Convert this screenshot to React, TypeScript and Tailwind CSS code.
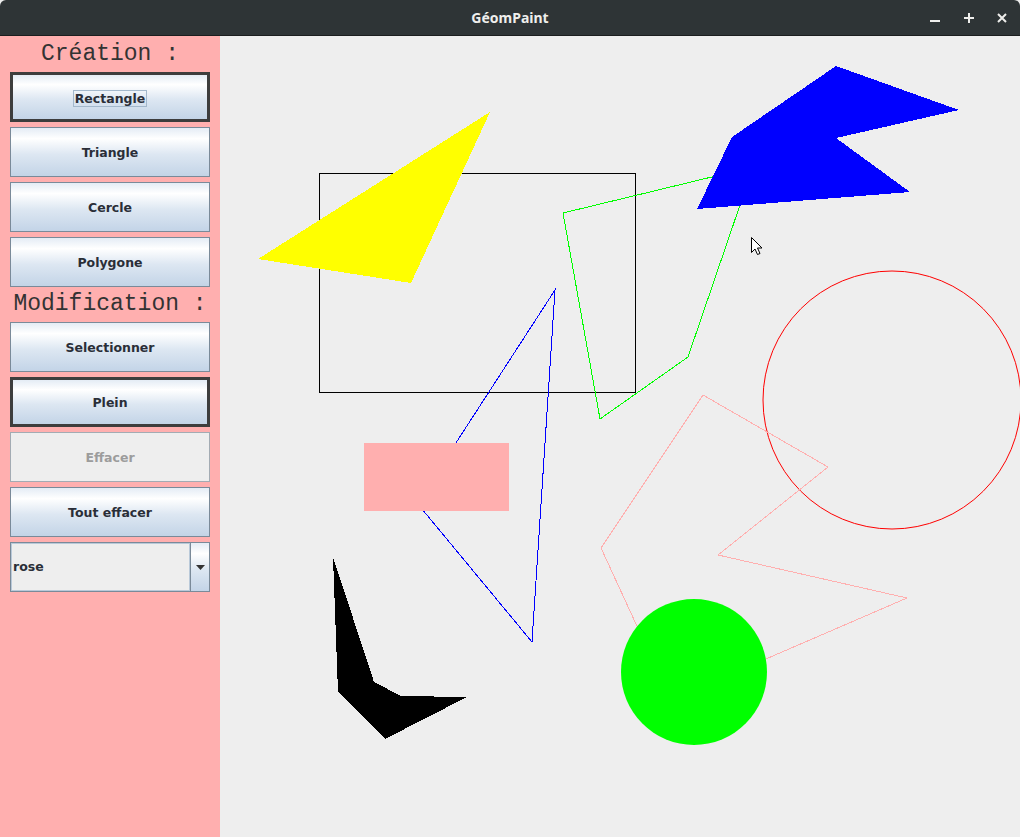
import React from "react";

type Variant = "normal" | "thick" | "disabled";

const gradient =
  "bg-[linear-gradient(to_bottom,#e4ecf5_0%,#ffffff_22%,#dde7f2_55%,#c3d4e7_100%)]";

const Button = ({
  label,
  variant = "normal",
  focused = false,
}: {
  label: string;
  variant?: Variant;
  focused?: boolean;
}) => {
  let cls = "border border-[#7a8a99] " + gradient + " text-[#2a2e38]";
  if (variant === "thick") {
    cls = "border-[3px] border-[#3d3d3d] " + gradient + " text-[#2a2e38]";
  } else if (variant === "disabled") {
    cls = "border border-[#a3abb3] bg-[#eeeeee] text-[#9c9c9c]";
  }
  return (
    <div
      className={
        "h-[50px] w-full flex items-center justify-center pt-[2px] text-[12.5px] font-bold " +
        cls
      }
      style={{ fontFamily: '"DejaVu Sans", sans-serif' }}
    >
      {focused ? (
        <span className="border border-[#a3b8cc] px-[1px] leading-[15px]">
          {label}
        </span>
      ) : (
        label
      )}
    </div>
  );
};

const Heading = ({ text, h }: { text: string; h: string }) => (
  <div
    className={
      "flex items-center justify-center text-[23px] text-[#333333] " + h
    }
    style={{ fontFamily: '"Liberation Mono", monospace' }}
  >
    {text}
  </div>
);

const Combo = () => (
  <div className="h-[50px] w-full flex border border-[#7a8a99]">
    <div
      className="flex-1 flex items-center pt-[1px] bg-[#eeeeee] border border-[#b9c9d9] pl-[1px] text-[12.5px] font-bold text-[#2a2e38]"
      style={{ fontFamily: '"DejaVu Sans", sans-serif' }}
    >
      rose
    </div>
    <div
      className={
        "w-[19px] flex items-center justify-center border-l border-[#7a8a99] " +
        gradient
      }
    >
      <svg width="9" height="5" viewBox="0 0 9 5">
        <path d="M0 0 H9 L4.5 5 Z" fill="#333" />
      </svg>
    </div>
  </div>
);

const Drawing = () => (
  <svg width={800} height={801} className="block">
    <g transform="translate(-220,-36)" shapeRendering="crispEdges">
      <rect x={319.5} y={173.5} width={316} height={219} fill="none" stroke="#000" />
      <polygon points="490,112 258,259 411,283" fill="#ffff00" />
      <polygon points="563,213 753,167 688,357 600,419" fill="none" stroke="#00ff00" />
      <polygon points="836,66 959,110 836,138 910,192 697,209 732,137" fill="#0000ff" />
      <polygon points="555,290 532,642 417,503" fill="none" stroke="#0000ff" />
      <rect x={364} y={443} width={145} height={68} fill="#ffafaf" />
      <circle cx={892} cy={400} r={129} fill="none" stroke="#ff0000" shapeRendering="auto" />
      <polygon points="703,395 828,467 718,555 907,598 671,700 601,548" fill="none" stroke="#ffafaf" />
      <circle cx={694} cy={672} r={73} fill="#00ff00" shapeRendering="auto" />
      <polygon points="333,557 374,682 401,696 467,697 385,739 338,692" fill="#000" />
      <path
        d="M751.5 237.5 V252.5 L755 249 L757.5 254.5 L760 253.5 L757.5 248 L762 248 Z"
        fill="#fff"
        stroke="#000"
        strokeWidth={1}
        shapeRendering="auto"
      />
    </g>
  </svg>
);

export default function App() {
  return (
    <div className="w-[1020px] h-[837px] flex flex-col overflow-hidden bg-[#eeeeee]">
      <div className="h-[36px] shrink-0 relative flex items-center justify-center bg-[#2e3436] border-b border-[#1b1e1f] rounded-t-[6px]">
        <span
          className="text-[14px] font-bold text-[#eeeeec]"
          style={{ fontFamily: '"Noto Sans", sans-serif' }}
        >
          GéomPaint
        </span>
        <div className="absolute right-0 top-0 h-[35px] flex items-center">
          <div className="w-[34px] flex justify-center pt-[6px]">
            <svg width="10" height="2">
              <rect width="10" height="2" fill="#eeeeec" />
            </svg>
          </div>
          <div className="w-[34px] flex justify-center">
            <svg width="10" height="10">
              <rect x="4" width="2" height="10" fill="#eeeeec" />
              <rect y="4" width="10" height="2" fill="#eeeeec" />
            </svg>
          </div>
          <div className="w-[34px] flex justify-center pr-[2px]">
            <svg width="10" height="10">
              <path d="M1 1 L9 9 M9 1 L1 9" stroke="#eeeeec" strokeWidth="2" />
            </svg>
          </div>
        </div>
      </div>
      <div className="flex flex-1">
        <div className="w-[220px] shrink-0 bg-[#ffafaf] px-[10px] flex flex-col">
          <Heading text="Création :" h="h-[36px]" />
          <div className="flex flex-col gap-[5px]">
            <Button label="Rectangle" variant="thick" focused />
            <Button label="Triangle" />
            <Button label="Cercle" />
            <Button label="Polygone" />
          </div>
          <Heading text="Modification :" h="h-[35px]" />
          <div className="flex flex-col gap-[5px]">
            <Button label="Selectionner" />
            <Button label="Plein" variant="thick" />
            <Button label="Effacer" variant="disabled" />
            <Button label="Tout effacer" />
            <Combo />
          </div>
        </div>
        <div className="flex-1 overflow-hidden bg-[#eeeeee]">
          <Drawing />
        </div>
      </div>
    </div>
  );
}
